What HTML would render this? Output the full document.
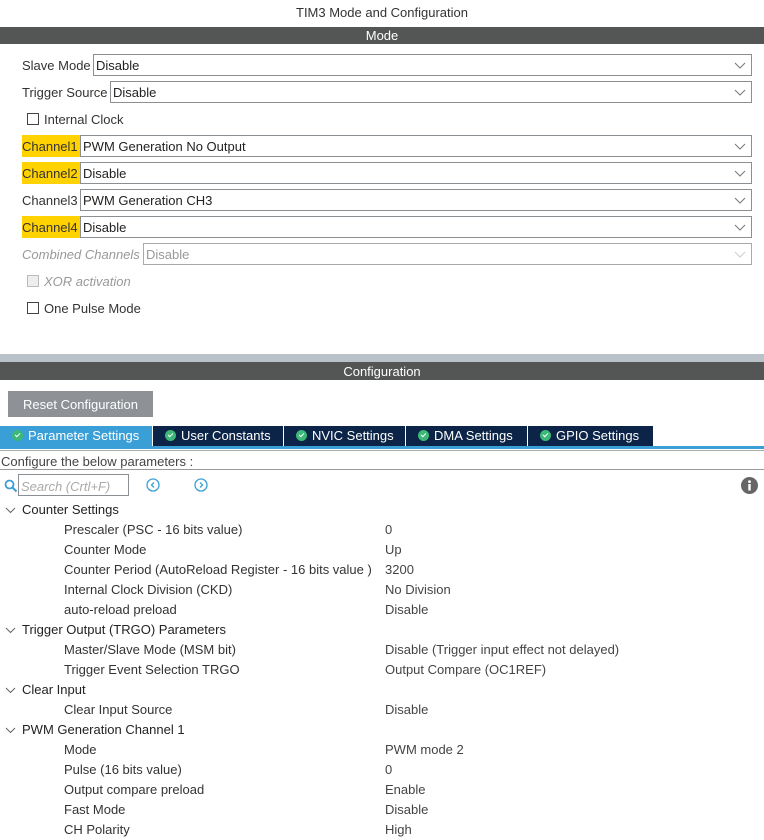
<!DOCTYPE html>
<html><head><meta charset="utf-8"><style>
*{margin:0;padding:0;box-sizing:border-box}
body{width:764px;height:840px;overflow:hidden;background:#fff;font-family:"Liberation Sans",Arial,sans-serif;font-size:13px;color:#333;position:relative}
.a{position:absolute;white-space:nowrap}
.bar{position:absolute;left:0;width:764px;background:#545655;color:#fff;text-align:center;font-size:13px}
.sel{position:absolute;height:22px;border:1px solid #8a8f94;background:#fff;padding:3px 0 0 2px;right:12px;line-height:16px;color:#222}
.sel svg{position:absolute;right:5px;top:7px}
.lab{position:absolute;left:22px;height:22px;line-height:24px}
.hl{background:#ffd200}
.cb{position:absolute;left:27px;width:12px;height:12px;border:1px solid #444;background:#fff}
.tab{position:absolute;top:426px;height:20px;background:#0b2447;color:#fff;line-height:20px;font-size:13px;border-right:1px solid #fff}
.tab i{display:inline-block;width:11px;height:11px;border-radius:50%;background:#3cb878;vertical-align:-1px;margin:0 5px 0 12px;position:relative}
.tab i:after{content:"";position:absolute;left:3px;top:2.5px;width:4px;height:2px;border-left:1.3px solid #fff;border-bottom:1.3px solid #fff;transform:rotate(-45deg)}
.r{position:absolute;height:20px;line-height:20px;white-space:nowrap}
</style></head><body>
<div class="a" style="top:5px;left:0;width:764px;text-align:center;color:#333">TIM3 Mode and Configuration</div>
<div class="bar" style="top:27px;height:17px;line-height:17px">Mode</div>

<div class="lab" style="top:54px">Slave Mode</div>
<div class="sel" style="top:54px;left:93px">Disable<svg width="12" height="7"><path d="M1 1l5 5 5-5" fill="none" stroke="#777"/></svg></div>
<div class="lab" style="top:81px">Trigger Source</div>
<div class="sel" style="top:81px;left:110px">Disable<svg width="12" height="7"><path d="M1 1l5 5 5-5" fill="none" stroke="#777"/></svg></div>
<div class="cb" style="top:113px"></div><div class="a" style="left:44px;top:112px">Internal Clock</div>

<div class="lab hl" style="top:135px;width:58px">Channel1</div>
<div class="sel" style="top:135px;left:80px">PWM Generation No Output<svg width="12" height="7"><path d="M1 1l5 5 5-5" fill="none" stroke="#777"/></svg></div>
<div class="lab hl" style="top:162px;width:58px">Channel2</div>
<div class="sel" style="top:162px;left:80px">Disable<svg width="12" height="7"><path d="M1 1l5 5 5-5" fill="none" stroke="#777"/></svg></div>
<div class="lab" style="top:189px">Channel3</div>
<div class="sel" style="top:189px;left:80px">PWM Generation CH3<svg width="12" height="7"><path d="M1 1l5 5 5-5" fill="none" stroke="#777"/></svg></div>
<div class="lab hl" style="top:216px;width:58px">Channel4</div>
<div class="sel" style="top:216px;left:80px">Disable<svg width="12" height="7"><path d="M1 1l5 5 5-5" fill="none" stroke="#777"/></svg></div>
<div class="lab" style="top:243px;color:#999;font-style:italic">Combined Channels</div>
<div class="sel" style="top:243px;left:143px;border-color:#aaa;color:#999">Disable<svg width="12" height="7"><path d="M1 1l5 5 5-5" fill="none" stroke="#ccc"/></svg></div>
<div class="cb" style="top:275px;border-color:#bbb;background:#eee"></div><div class="a" style="left:44px;top:274px;color:#999;font-style:italic">XOR activation</div>
<div class="cb" style="top:302px"></div><div class="a" style="left:44px;top:301px">One Pulse Mode</div>

<div class="a" style="top:354px;left:0;width:764px;height:8px;background:#b8c2c8"></div>
<div class="bar" style="top:362px;height:18px;line-height:19px">Configuration</div>
<div class="a" style="left:8px;top:391px;width:145px;height:26px;background:#8e9297;color:#fff;line-height:27px;text-align:center">Reset Configuration</div>

<div class="tab" style="left:0;width:153px;background:#3a9fd6"><i></i>Parameter Settings</div>
<div class="tab" style="left:153px;width:131px"><i></i>User Constants</div>
<div class="tab" style="left:284px;width:122px"><i></i>NVIC Settings</div>
<div class="tab" style="left:406px;width:122px"><i></i>DMA Settings</div>
<div class="tab" style="left:528px;width:126px"><i></i>GPIO Settings</div>
<div class="a" style="top:446px;left:0;width:764px;height:3px;background:#3a9fd6"></div>
<div class="a" style="top:450px;left:0;width:764px;height:1px;background:#aaa"></div>
<div class="a" style="top:454px;left:1px;color:#444">Configure the below parameters :</div>
<div class="a" style="top:469px;left:0;width:764px;height:1px;background:#999"></div>
<svg class="a" style="left:4px;top:479px" width="14" height="14"><circle cx="5.5" cy="5.5" r="4" fill="none" stroke="#3a9fd6" stroke-width="1.8"/><path d="M8.5 8.5l4 4" stroke="#3a9fd6" stroke-width="2"/></svg>
<div class="a" style="left:18px;top:474px;width:111px;height:22px;border:1px solid #8a8f94;color:#aaa;font-style:italic;padding:4px 0 0 2px">Search (Crtl+F)</div>
<svg class="a" style="left:146px;top:478px" width="14" height="14"><circle cx="7" cy="7" r="6" fill="none" stroke="#3a9fd6" stroke-width="1.3"/><path d="M8 4.5L5.5 7 8 9.5" fill="none" stroke="#3a9fd6" stroke-width="1.3"/></svg>
<svg class="a" style="left:194px;top:478px" width="14" height="14"><circle cx="7" cy="7" r="6" fill="none" stroke="#3a9fd6" stroke-width="1.3"/><path d="M6 4.5L8.5 7 6 9.5" fill="none" stroke="#3a9fd6" stroke-width="1.3"/></svg>
<svg class="a" style="left:741px;top:477px" width="17" height="17"><circle cx="8.5" cy="8.5" r="8.5" fill="#666"/><rect x="7.3" y="7" width="2.4" height="6.5" fill="#fff"/><circle cx="8.5" cy="4.6" r="1.4" fill="#fff"/></svg>

<div id="tree"></div>
<script>
var rows=[["p","Counter Settings"],["c","Prescaler (PSC - 16 bits value)","0"],["c","Counter Mode","Up"],["c","Counter Period (AutoReload Register - 16 bits value )","3200"],["c","Internal Clock Division (CKD)","No Division"],["c","auto-reload preload","Disable"],["p","Trigger Output (TRGO) Parameters"],["c","Master/Slave Mode (MSM bit)","Disable (Trigger input effect not delayed)"],["c","Trigger Event Selection TRGO","Output Compare (OC1REF)"],["p","Clear Input"],["c","Clear Input Source","Disable"],["p","PWM Generation Channel 1"],["c","Mode","PWM mode 2"],["c","Pulse (16 bits value)","0"],["c","Output compare preload","Enable"],["c","Fast Mode","Disable"],["c","CH Polarity","High"]];
var h="";rows.forEach(function(r,i){var y=500+i*20;
if(r[0]=="p"){h+='<svg class="a" style="left:5px;top:'+(y+7)+'px" width="11" height="7"><path d="M1 1l4.5 4.5L10 1" fill="none" stroke="#666"/></svg><div class="r" style="left:22px;top:'+y+'px;color:#222">'+r[1]+'</div>';}
else{h+='<div class="r" style="left:64px;top:'+y+'px">'+r[1]+'</div><div class="r" style="left:385px;top:'+y+'px;color:#444">'+r[2]+'</div>';}});
document.getElementById("tree").innerHTML=h;
</script>
</body></html>
